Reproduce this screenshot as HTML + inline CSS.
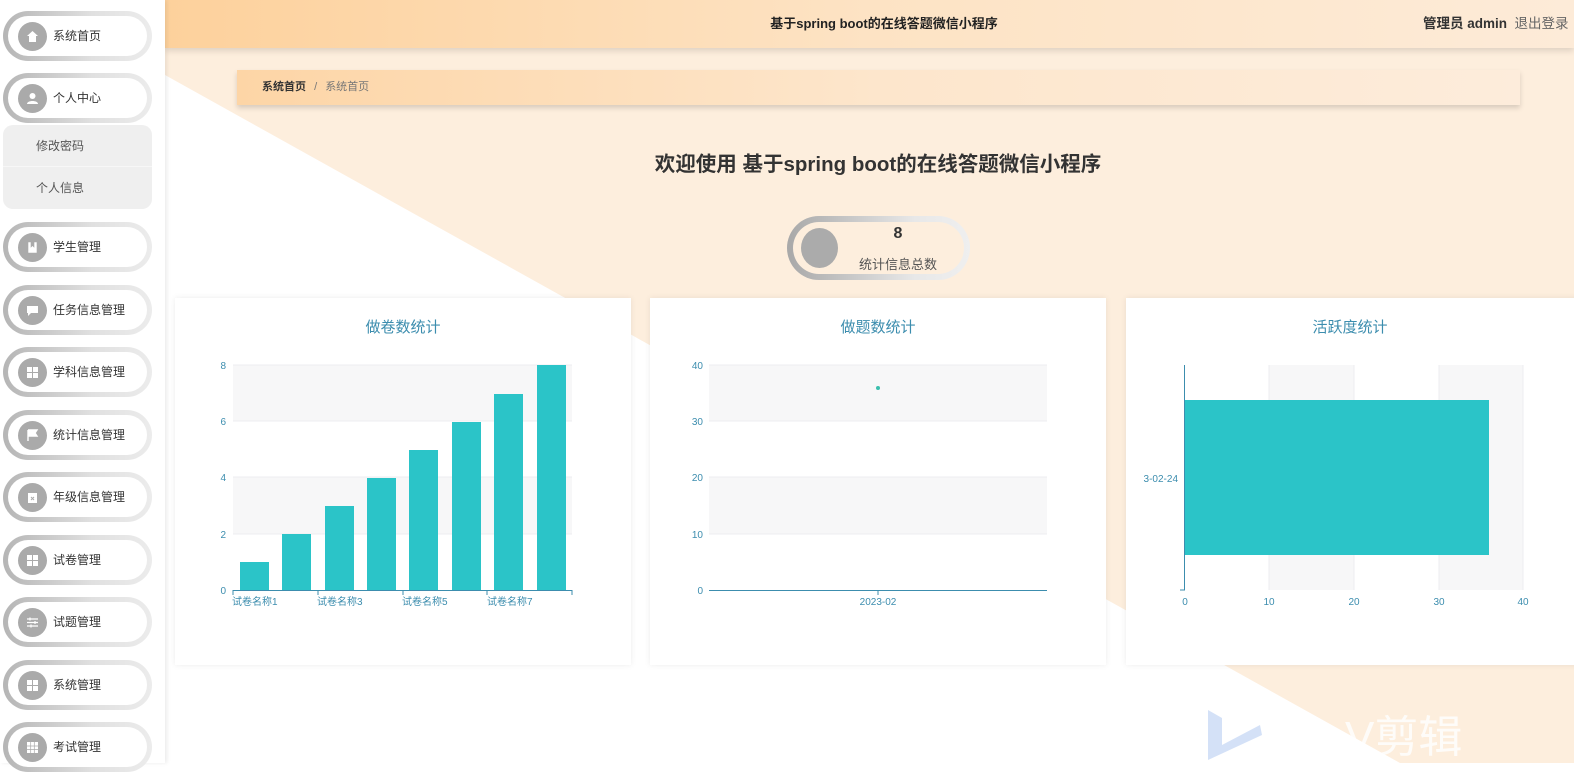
<!DOCTYPE html>
<html><head><meta charset="utf-8"><style>
*{margin:0;padding:0;box-sizing:border-box}
body{width:1574px;height:763px;overflow:hidden;position:relative;background:#fff;font-family:"Liberation Sans","Noto Sans CJK SC",sans-serif;color:#333}
.abs{position:absolute}
.side{left:0;top:0;width:165px;height:763px;background:#fff;box-shadow:2px 0 4px rgba(0,0,0,.08);z-index:5}
.pill{position:absolute;left:3px;width:149px;height:50px;border-radius:25px;background:linear-gradient(90deg,#b5b5b5,#e0e0e0 60%,#ececec);padding:5px}
.pill .in{width:100%;height:100%;border-radius:20px;background:#fff;position:relative}
.pill .ic{position:absolute;left:10px;top:6px;width:29px;height:29px;border-radius:50%;background:#aaa}
.pill .ic svg{position:absolute;left:8px;top:8px}
.pill .t{position:absolute;left:45px;top:0;line-height:40px;font-size:12px;color:#333}
.sub{left:3px;top:125px;width:149px;height:84px;background:#efefef;border-radius:10px}
.sub div{height:42px;line-height:42px;padding-left:33px;font-size:12px;color:#555}
.sub div:first-child{border-bottom:1px solid #f7f7f7}
.card{background:#fff;box-shadow:0 0 6px rgba(0,0,0,.08)}
.ct{position:absolute;top:18px;width:100%;text-align:center;color:#3c8dae;font-size:15px}
</style></head><body>
<svg class="abs" style="left:0;top:0" width="1574" height="763">
<polygon points="165,0 1574,0 1574,763 1400,763 165,75" fill="#fdeedd"/>
</svg>
<div class="abs" style="left:165px;top:0;width:1409px;height:48px;background:linear-gradient(90deg,#fdd19c,#fde3c4 50%,#fdebd8);box-shadow:0 3px 6px rgba(0,0,0,.12)"></div>
<div class="abs" style="left:165px;top:0;width:1438px;line-height:48px;text-align:center;font-size:13px;font-weight:bold;color:#222">基于spring boot的在线答题微信小程序</div>
<div class="abs" style="left:1423px;top:0;line-height:48px;font-size:13.5px;white-space:nowrap"><b style="color:#333">管理员 admin</b>&nbsp;&nbsp;<span style="color:#666">退出登录</span></div>
<div class="abs" style="left:237px;top:70px;width:1283px;height:35px;background:linear-gradient(90deg,#fdd5a6,#fde6cc 50%,#fdecdb);box-shadow:0 3px 5px rgba(0,0,0,.15);line-height:35px;padding-left:25px;font-size:11px"><b style="color:#333">系统首页</b> <span style="color:#777;margin:0 5px">/</span> <span style="color:#777">系统首页</span></div>
<div class="abs" style="left:165px;top:147px;width:1426px;text-align:center;font-size:20.5px;font-weight:bold;color:#333">欢迎使用 基于spring boot的在线答题微信小程序</div>
<div class="abs" style="left:787px;top:216px;width:183px;height:64px;border-radius:32px;background:linear-gradient(90deg,#a8a8a8,#e8e8e8 70%,#efefef);padding:6px">
<div style="width:100%;height:100%;border-radius:26px;background:#fdeedd;position:relative">
<div class="abs" style="left:8px;top:6px;width:37px;height:40px;border-radius:50%;background:#ababab"></div>
<div class="abs" style="left:50px;top:3px;width:110px;text-align:center;font-size:16px;font-weight:bold;color:#333">8</div>
<div class="abs" style="left:50px;top:32px;width:110px;text-align:center;font-size:13px;color:#555">统计信息总数</div>
</div></div>

<div class="abs card" style="left:175px;top:298px;width:456px;height:367px"><div class="ct">做卷数统计</div></div>
<div class="abs card" style="left:650px;top:298px;width:456px;height:367px"><div class="ct">做题数统计</div></div>
<div class="abs card" style="left:1126px;top:298px;width:460px;height:367px"><div class="ct" style="width:448px">活跃度统计</div></div>

<svg class="abs" style="left:0;top:0" width="1574" height="763" font-family="Liberation Sans" font-size="10" fill="#3c8dae">
<g>
<rect x="233" y="365" width="339" height="56" fill="#f7f7f8"/><rect x="233" y="477" width="339" height="57" fill="#f7f7f8"/>
<g stroke="#eceef0"><line x1="233" y1="365" x2="572" y2="365"/><line x1="233" y1="421" x2="572" y2="421"/><line x1="233" y1="477" x2="572" y2="477"/><line x1="233" y1="534" x2="572" y2="534"/></g>
<g fill="#2bc4c8">
<rect x="240" y="562" width="29" height="28"/><rect x="282" y="534" width="29" height="56"/><rect x="325" y="506" width="29" height="84"/><rect x="367" y="478" width="29" height="112"/><rect x="409" y="450" width="29" height="140"/><rect x="452" y="422" width="29" height="168"/><rect x="494" y="394" width="29" height="196"/><rect x="537" y="365" width="29" height="225"/></g>
<line x1="233" y1="590.5" x2="572" y2="590.5" stroke="#3c8dae"/>
<g stroke="#3c8dae"><line x1="233" y1="590" x2="233" y2="595"/><line x1="318" y1="590" x2="318" y2="595"/><line x1="403" y1="590" x2="403" y2="595"/><line x1="487" y1="590" x2="487" y2="595"/><line x1="572" y1="590" x2="572" y2="595"/></g>
<g text-anchor="end"><text x="226" y="369">8</text><text x="226" y="425">6</text><text x="226" y="481">4</text><text x="226" y="538">2</text><text x="226" y="594">0</text></g>
<g font-family="Liberation Sans,Noto Sans CJK SC"><text x="232" y="605">试卷名称1</text><text x="317" y="605">试卷名称3</text><text x="402" y="605">试卷名称5</text><text x="487" y="605">试卷名称7</text></g>
</g>
<g>
<rect x="709" y="365" width="338" height="56" fill="#f7f7f8"/><rect x="709" y="477" width="338" height="57" fill="#f7f7f8"/>
<g stroke="#eceef0"><line x1="709" y1="365" x2="1047" y2="365"/><line x1="709" y1="421" x2="1047" y2="421"/><line x1="709" y1="477" x2="1047" y2="477"/><line x1="709" y1="534" x2="1047" y2="534"/></g>
<line x1="709" y1="590.5" x2="1047" y2="590.5" stroke="#3c8dae"/><line x1="878" y1="590" x2="878" y2="595" stroke="#3c8dae"/>
<circle cx="878" cy="388" r="2" fill="#3bbfae"/>
<g text-anchor="end"><text x="703" y="369">40</text><text x="703" y="425">30</text><text x="703" y="481">20</text><text x="703" y="538">10</text><text x="703" y="594">0</text></g>
<text x="878" y="605" text-anchor="middle">2023-02</text>
</g>
<g>
<rect x="1269" y="365" width="85" height="225" fill="#f7f7f8"/><rect x="1439" y="365" width="84" height="225" fill="#f7f7f8"/>
<g stroke="#eceef0"><line x1="1269" y1="365" x2="1269" y2="590"/><line x1="1354" y1="365" x2="1354" y2="590"/><line x1="1439" y1="365" x2="1439" y2="590"/><line x1="1523" y1="365" x2="1523" y2="590"/></g>
<rect x="1185" y="400" width="304" height="155" fill="#2bc4c8"/>
<line x1="1184.5" y1="365" x2="1184.5" y2="590" stroke="#3c8dae"/><line x1="1180" y1="590" x2="1185" y2="590" stroke="#3c8dae"/>
<text x="1178" y="482" text-anchor="end">3-02-24</text>
<g text-anchor="middle"><text x="1185" y="605">0</text><text x="1269" y="605">10</text><text x="1354" y="605">20</text><text x="1439" y="605">30</text><text x="1523" y="605">40</text></g>
</g>
<polygon points="1208,710 1222,718 1222,745 1260,725 1262,735 1208,760" fill="#c9d9f5" opacity=".8"/>
<text x="1345" y="752" font-size="44" fill="#fff" font-family="Liberation Sans,Noto Sans CJK SC" opacity=".85">V剪辑</text>
</svg>

<div class="abs side">
<div class="pill" style="top:11px"><div class="in"><div class="ic"><svg width="13" height="13" viewBox="0 0 13 13"><path d="M6.5 1L1 6h2v6h7V6h2z" fill="#fff"/></svg></div><div class="t">系统首页</div></div></div>
<div class="pill" style="top:73px"><div class="in"><div class="ic"><svg width="13" height="13" viewBox="0 0 13 13"><circle cx="6.5" cy="4" r="3" fill="#fff"/><path d="M1 12c0-4 11-4 11 0z" fill="#fff"/></svg></div><div class="t">个人中心</div></div></div>
<div class="abs sub"><div>修改密码</div><div>个人信息</div></div>
<div class="pill" style="top:222px"><div class="in"><div class="ic"><svg width="13" height="13" viewBox="0 0 13 13"><path d="M2 1h9v11H2zM5 1v5l1.5-1.5L8 6V1" fill="#fff" stroke="#aaa" stroke-width=".6"/></svg></div><div class="t">学生管理</div></div></div>
<div class="pill" style="top:285px"><div class="in"><div class="ic"><svg width="13" height="13" viewBox="0 0 13 13"><path d="M1 2h11v7H5l-3 3V9H1z" fill="#fff"/></svg></div><div class="t">任务信息管理</div></div></div>
<div class="pill" style="top:347px"><div class="in"><div class="ic"><svg width="13" height="13" viewBox="0 0 13 13"><path d="M1 1h5v5H1zM7 1h5v5H7zM1 7h5v5H1zM7 7h5v5H7z" fill="#fff"/></svg></div><div class="t">学科信息管理</div></div></div>
<div class="pill" style="top:410px"><div class="in"><div class="ic"><svg width="13" height="13" viewBox="0 0 13 13"><path d="M2 1v11M2 1h9l-2 3 2 3H2" fill="#fff" stroke="#fff" stroke-width="1.4"/></svg></div><div class="t">统计信息管理</div></div></div>
<div class="pill" style="top:472px"><div class="in"><div class="ic"><svg width="13" height="13" viewBox="0 0 13 13"><path d="M2 2h9v10H2z" fill="#fff"/><path d="M5 6l3 3M8 6l-3 3" stroke="#aaa"/></svg></div><div class="t">年级信息管理</div></div></div>
<div class="pill" style="top:535px"><div class="in"><div class="ic"><svg width="13" height="13" viewBox="0 0 13 13"><path d="M1 1h5v5H1zM7 1h5v5H7zM1 7h5v5H1zM7 7h5v5H7z" fill="#fff"/></svg></div><div class="t">试卷管理</div></div></div>
<div class="pill" style="top:597px"><div class="in"><div class="ic"><svg width="13" height="13" viewBox="0 0 13 13"><path d="M1 3h11M1 6.5h11M1 10h11M4 1.5v3M9 5v3M5 8.5v3" stroke="#fff" stroke-width="1.2"/></svg></div><div class="t">试题管理</div></div></div>
<div class="pill" style="top:660px"><div class="in"><div class="ic"><svg width="13" height="13" viewBox="0 0 13 13"><path d="M1 1h5v5H1zM7 1h5v5H7zM1 7h5v5H1zM7 7h5v5H7z" fill="#fff"/></svg></div><div class="t">系统管理</div></div></div>
<div class="pill" style="top:722px"><div class="in"><div class="ic"><svg width="13" height="13" viewBox="0 0 13 13"><path d="M1 1h11v11H1z" fill="#fff"/><path d="M1 5h11M1 8.5h11M4.7 1v11M8.3 1v11" stroke="#aaa" stroke-width=".7"/></svg></div><div class="t">考试管理</div></div></div>
</div>
</body></html>
